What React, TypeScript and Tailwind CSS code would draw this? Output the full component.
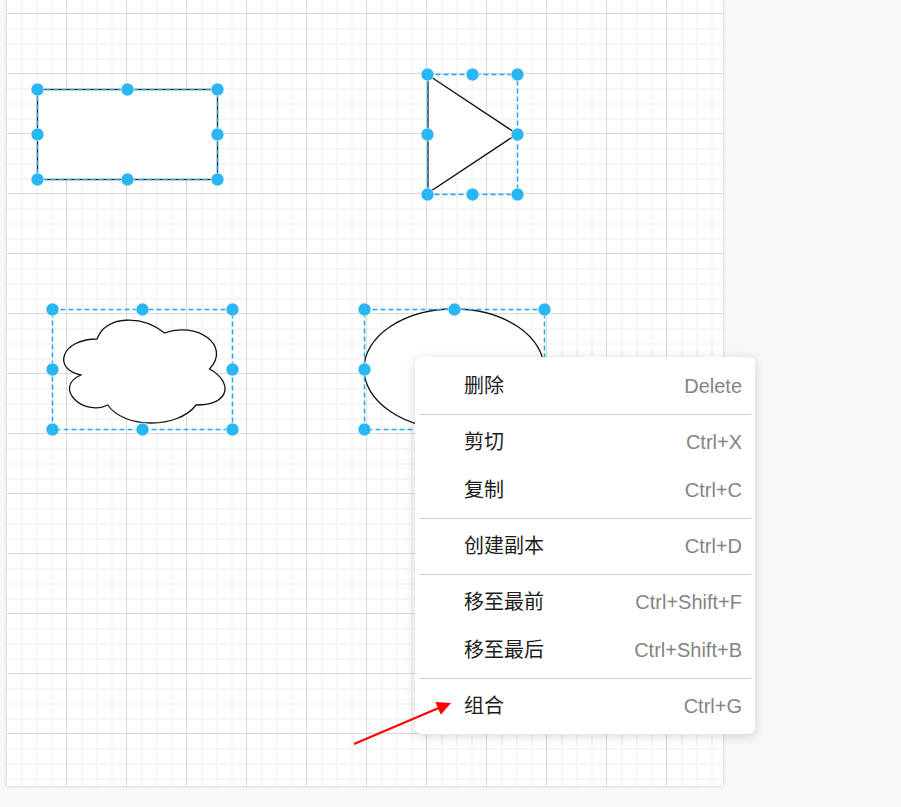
import React from "react";

type MenuEntry = { label: string; shortcut: string } | "sep";

const menu: MenuEntry[] = [
  { label: "删除", shortcut: "Delete" },
  "sep",
  { label: "剪切", shortcut: "Ctrl+X" },
  { label: "复制", shortcut: "Ctrl+C" },
  "sep",
  { label: "创建副本", shortcut: "Ctrl+D" },
  "sep",
  { label: "移至最前", shortcut: "Ctrl+Shift+F" },
  { label: "移至最后", shortcut: "Ctrl+Shift+B" },
  "sep",
  { label: "组合", shortcut: "Ctrl+G" },
];

const BLUE = "#29b6f2";

function Handles({ x, y, w, h }: { x: number; y: number; w: number; h: number }) {
  const xs = [x, x + w / 2, x + w];
  const ys = [y, y + h / 2, y + h];
  const pts: [number, number][] = [];
  ys.forEach((py, j) =>
    xs.forEach((px, i) => {
      if (i === 1 && j === 1) return;
      pts.push([px, py]);
    })
  );
  return (
    <g>
      <rect
        x={x + 0.5}
        y={y + 0.5}
        width={w}
        height={h}
        fill="none"
        stroke="#1ea9f1"
        strokeWidth={1.5}
        strokeDasharray="5 3"
      />
      {pts.map(([px, py], k) => (
        <circle key={k} cx={px + 0.5} cy={py + 0.5} r={6.5} fill={BLUE} stroke="#fff" strokeWidth={0.6} />
      ))}
    </g>
  );
}

function Canvas() {
  const W = 716;
  const H = 786;
  const minors: React.ReactNode[] = [];
  const majors: React.ReactNode[] = [];
  for (let x = 6; x <= 7 + W; x += 15) {
    if ((x - 6) % 60 === 0) majors.push(<line key={"x" + x} x1={x + 0.5} y1={0} x2={x + 0.5} y2={H} />);
    else minors.push(<line key={"x" + x} x1={x + 1} y1={0} x2={x + 1} y2={H} />);
  }
  for (let y = -2; y <= H; y += 15) {
    if ((y - 13) % 60 === 0) majors.push(<line key={"y" + y} x1={7} y1={y + 0.5} x2={7 + W} y2={y + 0.5} />);
    else minors.push(<line key={"y" + y} x1={7} y1={y + 1} x2={7 + W} y2={y + 1} />);
  }
  return (
    <svg width={W} height={H} viewBox={`7 0 ${W} ${H}`} className="block">
      <g stroke="#f6f6f6" strokeWidth={2} shapeRendering="crispEdges">{minors}</g>
      <g stroke="#d9d9d9" strokeWidth={1} shapeRendering="crispEdges">{majors}</g>

      {/* rectangle */}
      <rect x={37.5} y={89.5} width={180} height={90} fill="#fff" stroke="#111" strokeWidth={1.3} />
      <Handles x={37} y={89} w={180} h={90} />

      {/* triangle */}
      <path d="M428 75 L517 134 L428 193 Z" fill="#fff" stroke="#111" strokeWidth={1.3} strokeLinejoin="miter" />
      <Handles x={427} y={74} w={90} h={120} />

      {/* cloud */}
      <path
        d="M97 339 C61 339 52 369 80.8 375 C52 388.2 84.4 417 107.8 405 C124 429 178 429 196 405 C232 405 232 381 209.5 369 C232 345 196 321 164.5 333 C142 315 106 315 97 339 Z"
        fill="#fff"
        stroke="#111"
        strokeWidth={1.3}
      />
      <Handles x={52} y={309} w={180} h={120} />

      {/* ellipse */}
      <ellipse cx={454} cy={369} rx={90} ry={60} fill="#fff" stroke="#111" strokeWidth={1.3} />
      <Handles x={364} y={309} w={180} h={120} />
    </svg>
  );
}

function ContextMenu() {
  return (
    <div className="absolute left-[415px] top-[357px] w-[340px] bg-white rounded-[6px] shadow-[0_2px_12px_rgba(0,0,0,0.16)] pt-[5px] pb-[4px] flex flex-col">
      {menu.map((m, i) =>
        m === "sep" ? (
          <div key={i} className="mx-1 mt-1 mb-[3px] h-px bg-[#cdcdcd]" />
        ) : (
          <div key={i} className="h-12 flex items-center justify-between pl-[49px] pr-[13px] text-[20px]">
            <span className="text-[#1c1c1c]">{m.label}</span>
            <span className="text-[#848484]">{m.shortcut}</span>
          </div>
        )
      )}
    </div>
  );
}

export default function App() {
  return (
    <div
      className="relative w-full h-[807px] bg-[#f7f8fa] overflow-hidden"
      style={{ fontFamily: '"Liberation Sans", "Noto Sans CJK SC", sans-serif' }}
    >
      <div className="ml-[7px] w-[716px] h-[786px] bg-white shadow-[0_0_3px_rgba(0,0,0,0.22)]">
        <Canvas />
      </div>
      <ContextMenu />
      <svg className="absolute left-0 top-0 pointer-events-none" width={901} height={807}>
        <line x1={354} y1={744} x2={441} y2={707} stroke="#ff0000" strokeWidth={2} />
        <polygon points="451,703 435.4,702 440.8,714.8" fill="#ff0000" />
      </svg>
    </div>
  );
}
